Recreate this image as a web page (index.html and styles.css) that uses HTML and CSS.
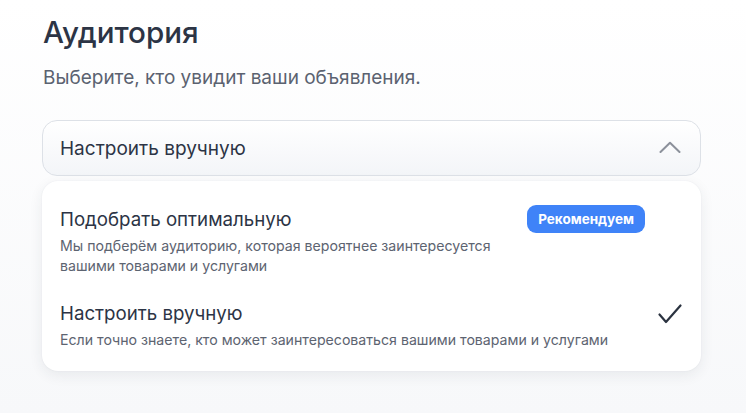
FILE: index.html
```html
<!DOCTYPE html>
<html lang="ru">
<head>
<meta charset="utf-8">
<link rel="stylesheet" href="styles.css">
</head>
<body>
<main class="page">
  <h1 class="title">Аудитория</h1>
  <p class="subtitle">Выберите, кто увидит ваши объявления.</p>
  <div class="select">
    <span class="select-value">Настроить вручную</span>
    <svg class="chevron" width="22" height="12" viewBox="0 0 22 12"><path d="M1.5 11 L11 1.8 L20.5 11" fill="none" stroke="#8c919b" stroke-width="2" stroke-linecap="round" stroke-linejoin="round"/></svg>
  </div>
  <div class="menu">
    <div class="option">
      <div class="option-text">
        <div class="option-title">Подобрать оптимальную</div>
        <div class="option-desc">Мы подберём аудиторию, которая вероятнее заинтересуется<br>вашими товарами и услугами</div>
      </div>
      <span class="badge">Рекомендуем</span>
    </div>
    <div class="option">
      <div class="option-text">
        <div class="option-title">Настроить вручную</div>
        <div class="option-desc">Если точно знаете, кто может заинтересоваться вашими товарами и услугами</div>
      </div>
      <svg class="check" width="24" height="20" viewBox="0 0 24 20"><path d="M1.5 10.5 L8 18 L22.5 1.5" fill="none" stroke="#2b3340" stroke-width="2.2" stroke-linecap="round" stroke-linejoin="round"/></svg>
    </div>
  </div>
</main>
</body>
</html>
```
FILE: styles.css
```css
html, body {
  margin: 0;
  height: 100%;
}
body {
  background: linear-gradient(180deg, #ffffff 0%, #f7f8fa 100%);
  font-family: Inter, Roboto, "Liberation Sans", sans-serif;
  color: #2c3445;
}
.page {
  padding: 14px 45px 0 42px;
  width: 659px;
}
.title {
  margin: 0;
  font-size: 29.6px;
  font-weight: 500;
  line-height: 36px;
  color: #2c3445;
  padding-left: 1px;
}
.subtitle {
  margin: 17px 0 0 1px;
  font-size: 19px;
  line-height: 22px;
  color: #5b6270;
}
.select {
  margin-top: 31px;
  height: 54px;
  border: 1px solid #dde1e7;
  border-radius: 15px;
  background: linear-gradient(180deg, #ffffff 0%, #f3f5f8 100%);
  display: flex;
  align-items: center;
  justify-content: space-between;
  padding: 0 19px 0 17px;
}
.select-value {
  font-size: 19px;
  color: #2c3445;
}
.chevron {
  margin-top: -2px;
}
.menu {
  margin-top: 5px;
  background: #fff;
  border-radius: 16px;
  box-shadow: 0 4px 14px rgba(40, 50, 70, 0.08), 0 0 2px rgba(40, 50, 70, 0.06);
  padding: 27px 19px 21px 18px;
  display: flex;
  flex-direction: column;
  gap: 26px;
}
.option {
  display: flex;
  justify-content: space-between;
  align-items: flex-start;
}
.option-title {
  font-size: 18.7px;
  line-height: 24px;
  color: #2c3445;
}
.option-desc {
  margin-top: 4px;
  font-size: 14.15px;
  line-height: 20px;
  color: #5d6471;
}
.badge {
  background: #3f83f8;
  color: #fff;
  font-size: 13.5px;
  font-weight: 700;
  border-radius: 9px;
  height: 28px;
  line-height: 28px;
  padding: 0 11px;
  margin-right: 37px;
  margin-top: -3px;
}
.check {
  margin-top: 2px;
}
```
